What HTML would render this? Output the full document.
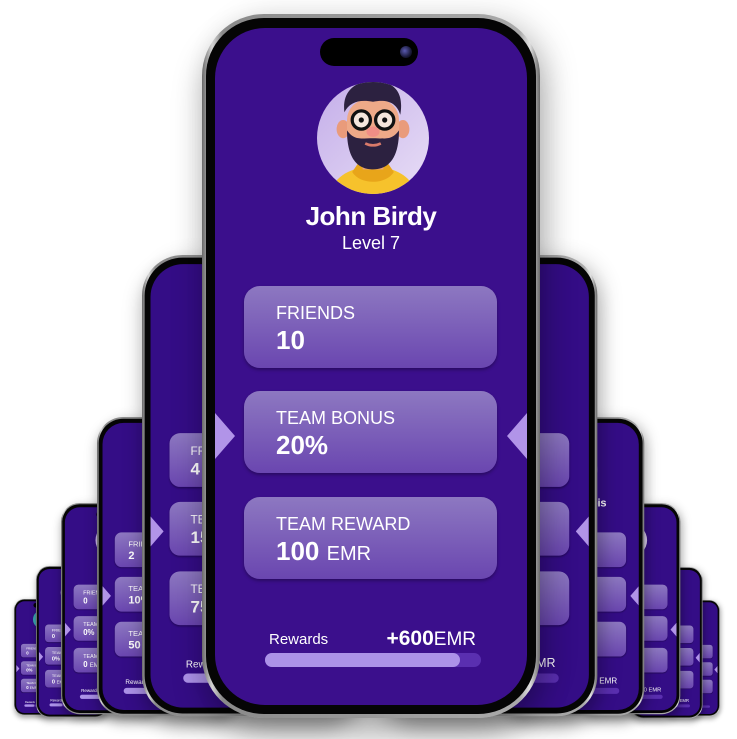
<!DOCTYPE html>
<html><head><meta charset="utf-8"><style>
*{margin:0;padding:0;box-sizing:border-box}
body{width:737px;height:739px;background:#fff;position:relative;overflow:hidden;font-family:"Liberation Sans",sans-serif}
.wrap{position:absolute;transform-origin:0 0;width:338px;height:704px}
.phone{position:absolute;left:0;top:0;width:338px;height:704px;border-radius:62px;background:linear-gradient(90deg,#6a6a6a,#d4d4d4 3%,#8a8a8a 6%,#aaaaaa 94%,#e0e0e0 97%,#6a6a6a);box-shadow:0 18px 30px rgba(0,0,0,.28),12px 0 30px rgba(0,0,0,.12)}
.bez{position:absolute;left:4px;top:4px;right:4px;bottom:4px;border-radius:58px;background:#050505}
.scr{position:absolute;left:13px;top:14px;width:312px;height:677px;border-radius:50px;background:#3b0f8c;overflow:hidden}
.isl{position:absolute;left:105px;top:10px;width:98px;height:28px;border-radius:14px;background:#000}
.cam{position:absolute;left:80px;top:8px;width:12px;height:12px;border-radius:50%;background:radial-gradient(circle at 40% 40%,#5a5ab0,#1a1a3a 60%,#000)}
.av{position:absolute;left:102px;top:54px;width:112px;height:112px;border-radius:50%;background:linear-gradient(135deg,#c4aee9,#e8def6);overflow:hidden}
.nm{position:absolute;left:0;width:312px;top:173px;text-align:center;color:#fff;font-weight:bold;font-size:26px;letter-spacing:-0.5px}
.lv{position:absolute;left:0;width:312px;top:205px;text-align:center;color:#fff;font-size:18px}
.card{position:absolute;left:29px;width:253px;height:82px;border-radius:16px;background:linear-gradient(180deg,#8d78c1,#6a46b0);box-shadow:0 2px 3px rgba(0,0,0,.3)}
.card .l{position:absolute;left:32px;top:17px;color:#fff;font-size:18px}
.card .v{position:absolute;left:32px;top:39px;color:#fff;font-size:26px;font-weight:bold}
.card .v small{font-size:20px;font-weight:normal}
.tri{position:absolute;top:385px;width:20px;height:46px;background:#b194e8}
.tl{left:0;clip-path:polygon(0 0,70% 35%,100% 50%,70% 65%,0 100%)}
.tr{right:0;clip-path:polygon(100% 0,30% 35%,0 50%,30% 65%,100% 100%)}
.rw{position:absolute;left:54px;top:603px;color:#fff;font-size:15px}
.rv{position:absolute;right:51px;top:599px;color:#fff;font-size:19px}
.rv b{font-size:21px}
.bar{position:absolute;left:50px;top:625px;width:216px;height:14px;border-radius:7px;background:#5a2fb0}
.bar i{position:absolute;left:0;top:0;height:14px;width:195px;border-radius:7px;background:#ac92e8}
.back .scr{background:#340d86}
</style></head><body>

<div class="wrap back" style="left:14px;top:599px;transform:scale(.165)"><div class="phone"><div class="bez"></div><div class="scr"><div class="isl"></div><div class="av" style="background:#3aa4b0"></div><div class="nm">Julia</div><div class="lv">Level 1</div><div class="card" style="top:258px"><div class="l">FRIENDS</div><div class="v">0</div></div><div class="card" style="top:363px"><div class="l">TEAM BONUS</div><div class="v">0%</div></div><div class="card" style="top:469px"><div class="l">TEAM REWARD</div><div class="v">0 <small>EMR</small></div></div><div class="tri tl"></div><div class="tri tr"></div><div class="rw">Rewards</div><div class="bar"><i style="width:60px"></i></div></div></div></div>
<div class="wrap back" style="left:664px;top:600px;transform:scale(.165)"><div class="phone"><div class="bez"></div><div class="scr"><div class="isl"></div><div class="av"></div><div class="nm">Mia</div><div class="card" style="top:258px"></div><div class="card" style="top:363px"></div><div class="card" style="top:469px"></div><div class="tri tl"></div><div class="tri tr"></div><div class="bar"><i style="width:60px"></i></div></div></div></div>

<div class="wrap back" style="left:36px;top:566px;transform:scale(.215)"><div class="phone"><div class="bez"></div><div class="scr"><div class="isl"></div><div class="av"></div><div class="nm">Julien</div><div class="lv">Level 1</div><div class="card" style="top:258px"><div class="l">FRIENDS</div><div class="v">0</div></div><div class="card" style="top:363px"><div class="l">TEAM BONUS</div><div class="v">0%</div></div><div class="card" style="top:469px"><div class="l">TEAM REWARD</div><div class="v">0 <small>EMR</small></div></div><div class="tri tl"></div><div class="tri tr"></div><div class="rw">Rewards</div><div class="bar"><i style="width:60px"></i></div></div></div></div>
<div class="wrap back" style="left:630px;top:567px;transform:scale(.215)"><div class="phone"><div class="bez"></div><div class="scr"><div class="isl"></div><div class="av"></div><div class="nm">Alexander</div><div class="card" style="top:258px"></div><div class="card" style="top:363px"></div><div class="card" style="top:469px"></div><div class="tri tl"></div><div class="tri tr"></div><div class="rv">0 EMR</div><div class="bar"><i style="width:60px"></i></div></div></div></div>

<div class="wrap back" style="left:61px;top:503px;transform:scale(.30)"><div class="phone"><div class="bez"></div><div class="scr"><div class="isl"></div><div class="av"></div><div class="nm">Camille</div><div class="lv">Level 2</div><div class="card" style="top:258px"><div class="l">FRIENDS</div><div class="v">0</div></div><div class="card" style="top:363px"><div class="l">TEAM BONUS</div><div class="v">0%</div></div><div class="card" style="top:469px"><div class="l">TEAM REWARD</div><div class="v">0 <small>EMR</small></div></div><div class="tri tl"></div><div class="tri tr"></div><div class="rw">Rewards</div><div class="bar"><i style="width:80px"></i></div></div></div></div>
<div class="wrap back" style="left:579px;top:503px;transform:scale(.30)"><div class="phone"><div class="bez"></div><div class="scr"><div class="isl"></div><div class="av"></div><div class="nm">Daniel</div><div class="card" style="top:258px"></div><div class="card" style="top:363px"></div><div class="card" style="top:469px"></div><div class="tri tl"></div><div class="tri tr"></div><div class="rv">0 EMR</div><div class="bar"><i style="width:80px"></i></div></div></div></div>

<div class="wrap back" style="left:97px;top:417px;transform:scale(.424)"><div class="phone"><div class="bez"></div><div class="scr"><div class="isl"></div><div class="av"></div><div class="nm">Thomas</div><div class="lv">Level 3</div><div class="card" style="top:258px"><div class="l">FRIENDS</div><div class="v">2</div></div><div class="card" style="top:363px"><div class="l">TEAM BONUS</div><div class="v">10%</div></div><div class="card" style="top:469px"><div class="l">TEAM REWARD</div><div class="v">50 <small>EMR</small></div></div><div class="tri tl"></div><div class="tri tr"></div><div class="rw">Rewards</div><div class="bar"><i style="width:120px"></i></div></div></div></div>
<div class="wrap back" style="left:501px;top:417px;transform:scale(.424)"><div class="phone"><div class="bez"></div><div class="scr"><div class="isl"></div><div class="av"></div><div class="nm">Louis Dubois</div><div class="card" style="top:258px"></div><div class="card" style="top:363px"></div><div class="card" style="top:469px"></div><div class="tri tl"></div><div class="tri tr"></div><div class="rv">0 EMR</div><div class="bar"><i style="width:120px"></i></div></div></div></div>

<div class="wrap back" style="left:142px;top:255px;transform:scale(.655)"><div class="phone"><div class="bez"></div><div class="scr"><div class="isl"></div><div class="av"></div><div class="nm">Emma</div><div class="lv">Level 5</div><div class="card" style="top:258px"><div class="l">FRIENDS</div><div class="v">4</div></div><div class="card" style="top:363px"><div class="l">TEAM BONUS</div><div class="v">15%</div></div><div class="card" style="top:469px"><div class="l">TEAM REWARD</div><div class="v">75 <small>EMR</small></div></div><div class="tri tl"></div><div class="tri tr"></div><div class="rw">Rewards</div><div class="bar"><i style="width:160px"></i></div></div></div></div>
<div class="wrap back" style="left:376px;top:255px;transform:scale(.655)"><div class="phone"><div class="bez"></div><div class="scr"><div class="isl"></div><div class="av"></div><div class="nm">Lucy</div><div class="card" style="top:258px"></div><div class="card" style="top:363px"></div><div class="card" style="top:469px"></div><div class="tri tl"></div><div class="tri tr"></div><div class="rv">75 EMR</div><div class="bar"><i style="width:160px"></i></div></div></div></div>

<div class="wrap" style="left:202px;top:14px">
 <div class="phone"><div class="bez"></div>
  <div class="scr">
   <div class="isl"><div class="cam"></div></div>
   <div class="av">
    <svg width="112" height="112" viewBox="0 0 112 112">
     <g transform="translate(56,116) scale(1.3) translate(-56,-106)">
     <path d="M20 112 C22 92 36 82 56 82 C76 82 90 92 92 112Z" fill="#f6c22c"/>
     <path d="M40 86 C46 96 66 96 72 86 L68 80 H44Z" fill="#e8a51a"/>
     <rect x="48" y="70" width="16" height="14" fill="#e9a27e"/>
     <ellipse cx="33" cy="53" rx="5" ry="7" fill="#e99b7b"/>
     <ellipse cx="79" cy="53" rx="5" ry="7" fill="#e99b7b"/>
     <rect x="36" y="30" width="40" height="44" rx="16" fill="#eea988"/>
     <path d="M36 54 C36 78 46 84 56 84 C66 84 76 78 76 54 C70 62 66 60 56 60 C46 60 42 62 36 54Z" fill="#2c2140"/>
     <path d="M34 40 C32 24 42 16 56 16 C72 16 80 24 77 42 C74 32 66 30 56 32 C46 30 38 32 34 40Z" fill="#2c2140"/>
     <circle cx="47" cy="46" r="7" fill="#f5e6dc" stroke="#111" stroke-width="2.5"/>
     <circle cx="65" cy="46" r="7" fill="#f5e6dc" stroke="#111" stroke-width="2.5"/>
     <circle cx="47" cy="46" r="2" fill="#111"/><circle cx="65" cy="46" r="2" fill="#111"/>
     <ellipse cx="56" cy="55" rx="5" ry="4" fill="#f08e86"/>
     <path d="M50 64 Q56 67 62 64" stroke="#d97a6a" stroke-width="2" fill="none"/>
     </g>
    </svg>
   </div>
   <div class="nm">John Birdy</div>
   <div class="lv">Level 7</div>
   <div class="card" style="top:258px"><div class="l">FRIENDS</div><div class="v">10</div></div>
   <div class="card" style="top:363px"><div class="l">TEAM BONUS</div><div class="v">20%</div></div>
   <div class="card" style="top:469px"><div class="l">TEAM REWARD</div><div class="v">100 <small>EMR</small></div></div>
   <div class="tri tl"></div><div class="tri tr"></div>
   <div class="rw">Rewards</div>
   <div class="rv"><b>+600</b>EMR</div>
   <div class="bar"><i></i></div>
  </div>
 </div>
</div>
</body></html>
